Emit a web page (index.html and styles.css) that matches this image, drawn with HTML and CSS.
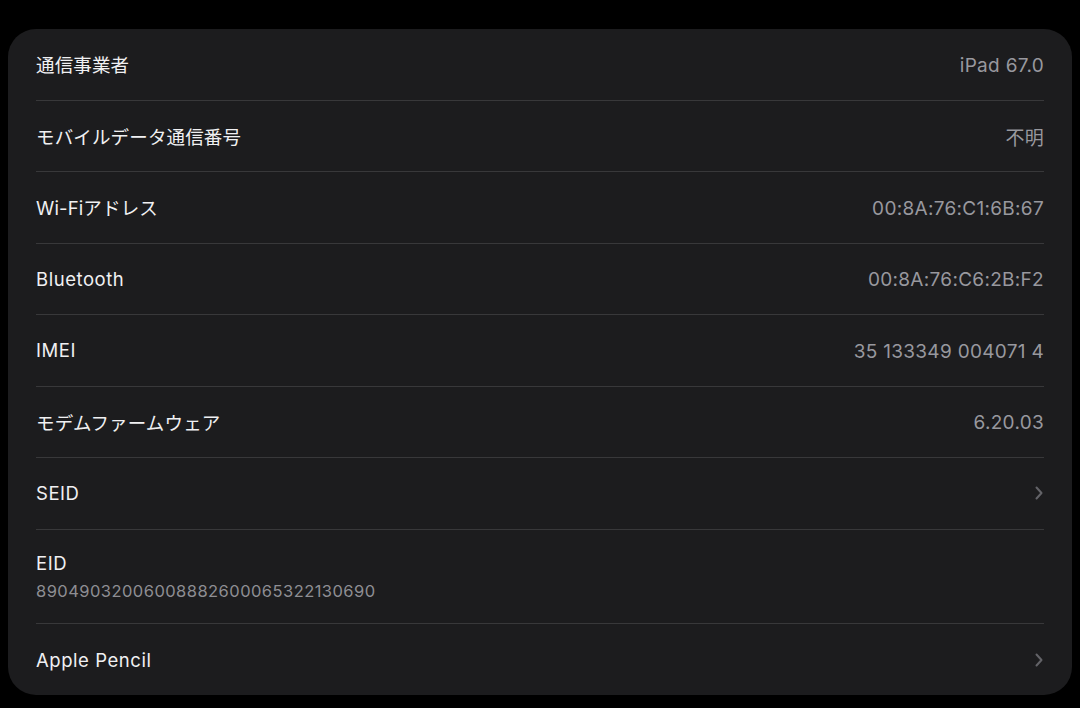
FILE: index.html
```html
<!DOCTYPE html>
<html lang="ja">
<head>
<meta charset="utf-8">
<link rel="stylesheet" href="styles.css">
</head>
<body>
<div class="card">
  <div class="row"><span class="label">通信事業者</span><span class="value">iPad 67.0</span></div>
  <div class="row"><span class="label">モバイルデータ通信番号</span><span class="value">不明</span></div>
  <div class="row"><span class="label">Wi-Fiアドレス</span><span class="value">00:8A:76:C1:6B:67</span></div>
  <div class="row"><span class="label latin">Bluetooth</span><span class="value">00:8A:76:C6:2B:F2</span></div>
  <div class="row"><span class="label latin">IMEI</span><span class="value">35 133349 004071 4</span></div>
  <div class="row"><span class="label">モデムファームウェア</span><span class="value">6.20.03</span></div>
  <div class="row"><span class="label latin">SEID</span><svg class="chev" viewBox="0 0 8 14" width="8" height="14"><path d="M1.5 1.5 L6.5 7 L1.5 12.5" fill="none" stroke="#636368" stroke-width="2" stroke-linecap="round" stroke-linejoin="round"/></svg></div>
  <div class="row tall"><div class="stack"><span class="label latin">EID</span><span class="sub">89049032006008882600065322130690</span></div></div>
  <div class="row last"><span class="label latin">Apple Pencil</span><svg class="chev" viewBox="0 0 8 14" width="8" height="14"><path d="M1.5 1.5 L6.5 7 L1.5 12.5" fill="none" stroke="#636368" stroke-width="2" stroke-linecap="round" stroke-linejoin="round"/></svg></div>
</div>
</body>
</html>
```
FILE: styles.css
```css
html, body {
  margin: 0;
  padding: 0;
  background: #000;
  width: 1080px;
  height: 708px;
  overflow: hidden;
  font-family: Inter, "Noto Sans CJK JP", sans-serif;
}
body {
  padding: 29px 8px 0 8px;
  box-sizing: border-box;
}
.card {
  background: #1c1c1e;
  border-radius: 28px;
  height: 666px;
  padding: 0 28px;
  display: flex;
  flex-direction: column;
}
.row {
  height: 71.5px;
  display: flex;
  align-items: center;
  justify-content: space-between;
  border-bottom: 1px solid #38383a;
  box-sizing: border-box;
  flex-shrink: 0;
}
.row.tall {
  height: 94px;
}
.row.last {
  border-bottom: none;
  height: 72px;
}
.label {
  color: #f0f0f2;
  font-size: 18.5px;
  letter-spacing: 0.15px;
}
.label.latin {
  letter-spacing: 0.55px;
}
.value {
  color: #98989e;
  font-size: 19px;
  letter-spacing: 0.3px;
  padding-top: 2px;
}
.chev {
  margin-right: 1px;
}
.stack {
  display: flex;
  flex-direction: column;
  gap: 7px;
}
.sub {
  color: #8e8e93;
  font-size: 16.5px;
  letter-spacing: 0.45px;
}
```
